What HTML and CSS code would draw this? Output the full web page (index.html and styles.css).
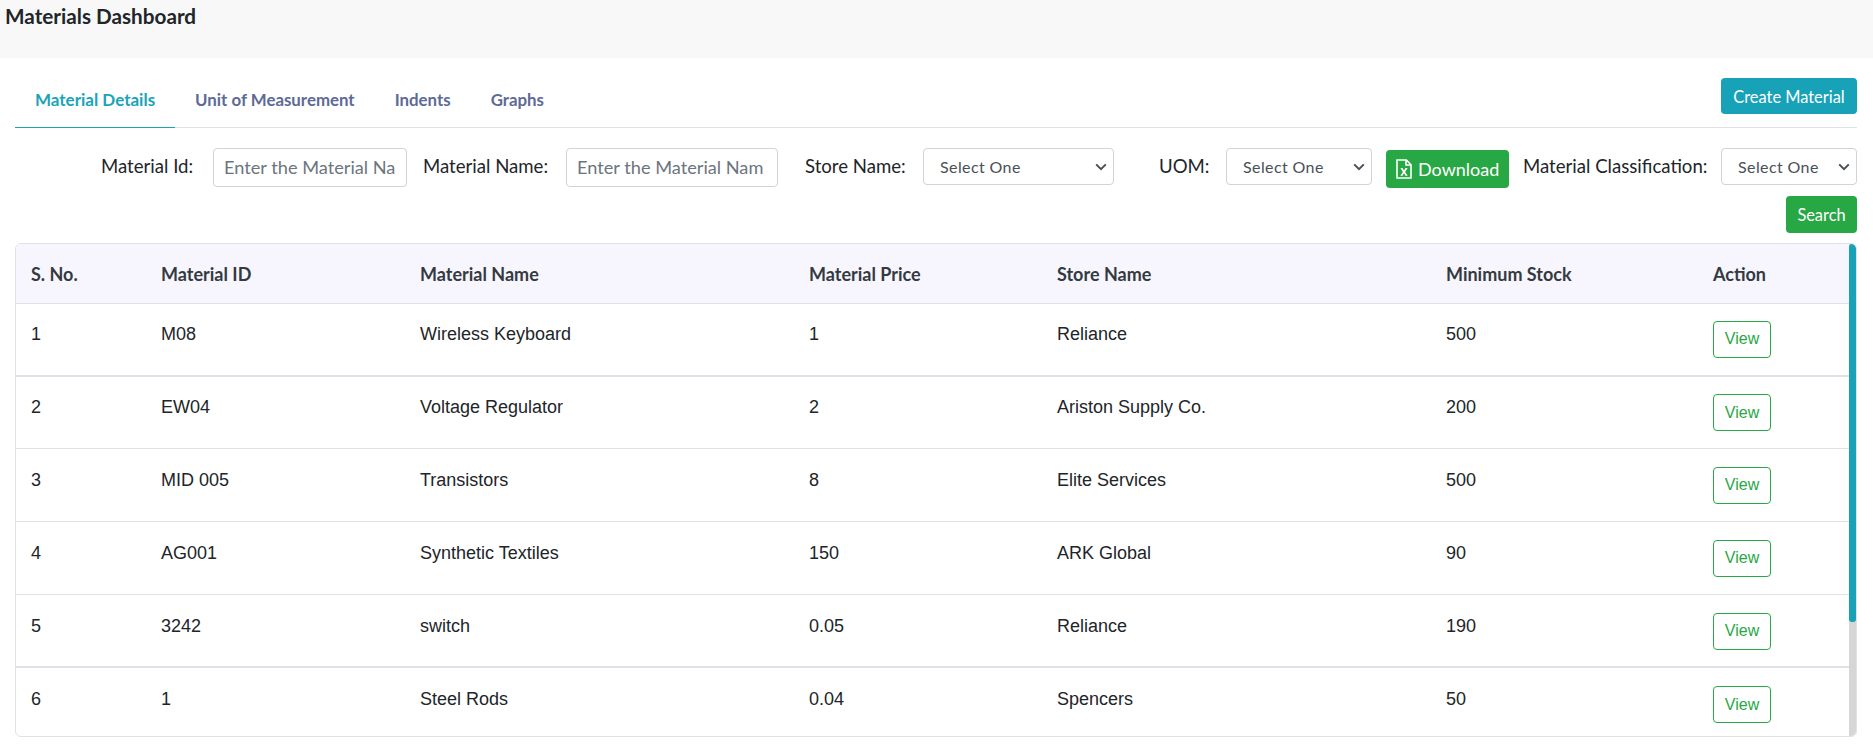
FILE: index.html
```html
<!DOCTYPE html>
<html lang="en">
<head>
<meta charset="utf-8">
<title>Materials Dashboard</title>
<link rel="stylesheet" href="styles.css">
</head>
<body>
<header class="page-header"><h1 class="page-title">Materials Dashboard</h1></header>
<main class="content">
  <div class="tabs-bar">
    <nav class="tabs">
      <a class="tab active">Material Details</a>
      <a class="tab">Unit of Measurement</a>
      <a class="tab">Indents</a>
      <a class="tab">Graphs</a>
    </nav>
    <button class="btn btn-info">Create Material</button>
  </div>
  <form class="filters">
    <label class="filter-label label-id">Material Id:</label>
    <input class="field input-id" placeholder="Enter the Material Name">
    <label class="filter-label label-name">Material Name:</label>
    <input class="field input-name" placeholder="Enter the Material Name">
    <label class="filter-label label-store">Store Name:</label>
    <select class="field select select-store"><option>Select One</option></select>
    <label class="filter-label label-uom">UOM:</label>
    <select class="field select select-uom"><option>Select One</option></select>
    <button type="button" class="btn btn-success btn-download">
      <svg class="xl-icon" width="16" height="20" viewBox="0 0 16 20" fill="none" stroke="#fff" stroke-width="1.6"><path d="M1 1h9.4L15 5.8V19H1z"/><path d="M10 1v5h5"/><path d="M4.4 9h2.1l1.5 2.5L9.5 9h2.1L9.1 12.9l2.6 3.9H9.5L8 14.3l-1.5 2.5H4.3l2.6-3.9z" fill="#fff" stroke="none"/></svg>
      <span>Download</span>
    </button>
    <label class="filter-label label-class">Material Classification:</label>
    <select class="field select select-class"><option>Select One</option></select>
  </form>
  <div class="search-row"><button type="button" class="btn btn-success btn-search">Search</button></div>
  <section class="card">
    <div class="table-wrap">
      <table class="data-table">
        <colgroup>
          <col class="c1"><col class="c2"><col class="c3"><col class="c4"><col class="c5"><col class="c6"><col class="c7">
        </colgroup>
        <thead>
          <tr><th>S. No.</th><th>Material ID</th><th>Material Name</th><th>Material Price</th><th>Store Name</th><th>Minimum Stock</th><th>Action</th></tr>
        </thead>
        <tbody>
          <tr class="thick"><td>1</td><td>M08</td><td>Wireless Keyboard</td><td>1</td><td>Reliance</td><td>500</td><td><button class="btn-view">View</button></td></tr>
          <tr class="short"><td>2</td><td>EW04</td><td>Voltage Regulator</td><td>2</td><td>Ariston Supply Co.</td><td>200</td><td><button class="btn-view">View</button></td></tr>
          <tr class="low"><td>3</td><td>MID 005</td><td>Transistors</td><td>8</td><td>Elite Services</td><td>500</td><td><button class="btn-view">View</button></td></tr>
          <tr class="low"><td>4</td><td>AG001</td><td>Synthetic Textiles</td><td>150</td><td>ARK Global</td><td>90</td><td><button class="btn-view">View</button></td></tr>
          <tr class="low thick"><td>5</td><td>3242</td><td>switch</td><td>0.05</td><td>Reliance</td><td>190</td><td><button class="btn-view">View</button></td></tr>
          <tr class="low"><td>6</td><td>1</td><td>Steel Rods</td><td>0.04</td><td>Spencers</td><td>50</td><td><button class="btn-view">View</button></td></tr>
        </tbody>
      </table>
    </div>
    <div class="scrollbar"><div class="scroll-thumb"></div></div>
  </section>
</main>
</body>
</html>
```
FILE: styles.css
```css
* { box-sizing: border-box; }
html, body { margin: 0; height: 749px; overflow: hidden; background: #fff; }
body { font-family: Lato, "Liberation Sans", sans-serif; color: #212529; }

.page-header { height: 58px; background: #f8f8f8; padding: 4px 5px 0; }
.page-title { margin: 0; font-size: 20.7px; line-height: 24px; font-weight: 700; color: #212529; }

.content { padding: 20px 16px 0 15px; }

.tabs-bar { display: flex; justify-content: space-between; align-items: flex-start; height: 50px; border-bottom: 1px solid #dee2e6; }
.tabs { display: flex; height: 50px; }
.tab { display: block; height: 50px; padding: 10px 20px 0; font-size: 16.85px; line-height: 24px; font-weight: 700; color: #5d6a97; border-bottom: 1px solid transparent; }
.tab.active { font-size: 17px; color: #1aa3b8; border-bottom-color: #1aa3b8; }

.btn { border: 0; border-radius: 4px; color: #fff; font-family: Lato, sans-serif; font-size: 16.4px; padding: 0; cursor: pointer; }
.btn-info { width: 136px; height: 36px; background: #17a2b8; }
.btn-success { background: #28a745; }

.filters { display: flex; align-items: flex-start; margin-top: 20px; height: 40px; }
.filter-label { font-size: 18.6px; line-height: 24px; padding-top: 6px; color: #212529; white-space: nowrap; }
.field { height: 39px; border: 1px solid #ced4da; border-radius: 4px; background: #fff; font-family: Lato, sans-serif; color: #495057; }
input.field { font-size: 18.2px; padding: 0 11px 2px 10px; }
input.field::placeholder { color: #6c757d; opacity: 1; }
.select { appearance: none; height: 37px; font-size: 16px; padding: 0 0 1px 16px; letter-spacing: .4px; background-image: url("data:image/svg+xml,%3Csvg xmlns='http://www.w3.org/2000/svg' width='12' height='8' viewBox='0 0 12 8'%3E%3Cpath d='M1.2 1.4 6 6.2l4.8-4.8' fill='none' stroke='%23495057' stroke-width='2'/%3E%3C/svg%3E"); background-repeat: no-repeat; background-position: right 6px center; }

.label-id { margin-left: 86px; width: 112px; }
.input-id { width: 194px; }
.label-name { margin-left: 16px; width: 143px; }
input.input-name { width: 212px; padding-right: 14px; }
.label-store { margin-left: 27px; width: 118px; }
.select-store { width: 191px; }
.label-uom { margin-left: 45px; width: 67px; }
.select-uom { width: 146px; }
.btn-download { display: flex; align-items: center; gap: 6px; width: 123px; height: 38px; margin: 2px 14px 0; padding-left: 10px; font-size: 18px; }
.label-class { width: 198px; }
.select-class { width: 136px; }

.search-row { display: flex; justify-content: flex-end; margin-top: 8px; }
.btn-search { width: 71px; height: 37px; }

.card { display: flex; height: 494px; margin-top: 10px; border: 1px solid #dee2e6; border-radius: 6px; overflow: hidden; }
.table-wrap { flex: 1; overflow: hidden; }
.data-table { width: 100%; border-collapse: collapse; table-layout: fixed; }
.c1 { width: 130px; } .c2 { width: 259px; } .c3 { width: 389px; } .c4 { width: 248px; } .c5 { width: 389px; } .c6 { width: 267px; }

.data-table th { height: 59px; padding: 2px 15px 0; background: #f7f6fe; text-align: left; font-size: 18px; font-weight: 700; color: #343a40; border-bottom: 1px solid #dee2e6; }
.data-table td { height: 73px; padding: 17px 15px 0; vertical-align: top; font-family: "Liberation Sans", Arial, sans-serif; font-size: 18px; line-height: 26px; color: #212529; border-bottom: 1px solid #dee2e6; }
.data-table tr.thick td { border-bottom: 2px solid #dee2e6; }
.data-table tr.short td { height: 72px; }
.data-table tr.low td { padding-top: 18px; }
.btn-view { display: block; width: 58px; height: 37px; border: 1px solid #28a745; border-radius: 4px; background: #fff; color: #28a745; font-family: "Liberation Sans", Arial, sans-serif; font-size: 16px; padding: 0; }

.scrollbar { width: 7px; background: #d6d6d6; flex: none; }
.scroll-thumb { height: 378px; background: #17a2b8; border-radius: 3px; }
```
